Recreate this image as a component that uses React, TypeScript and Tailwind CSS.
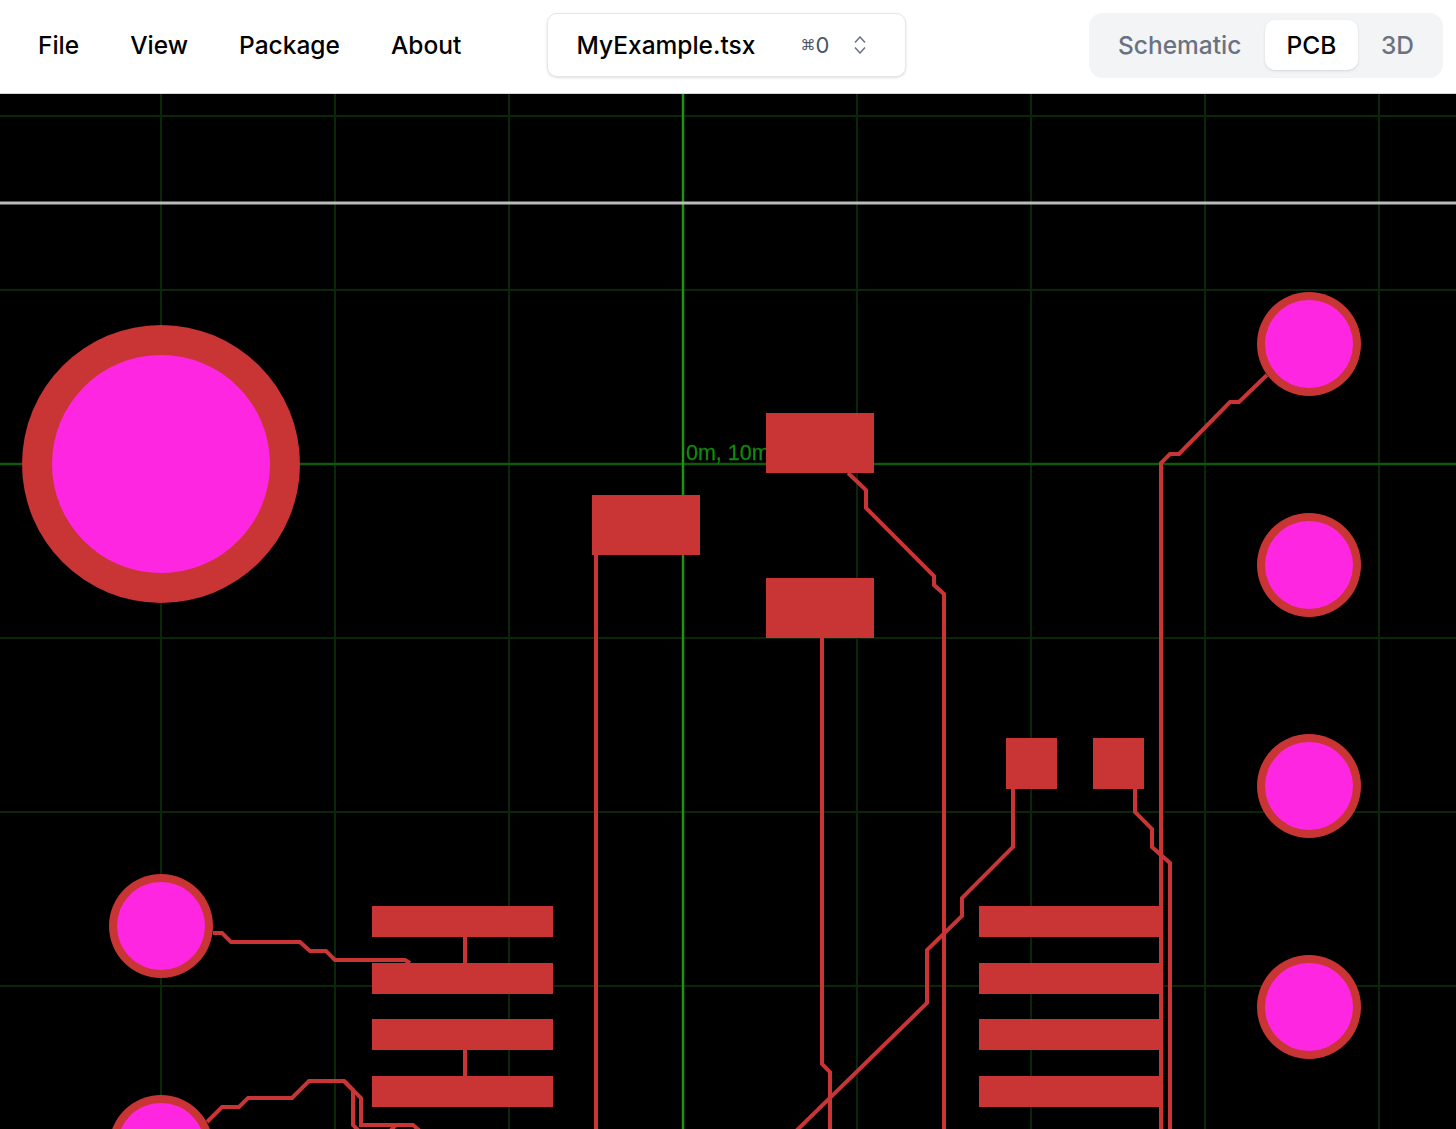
import React from 'react';

const menuItems = ['File', 'View', 'Package', 'About'];

const gridX = [161, 335, 509, 857, 1031, 1205, 1379];
const gridY = [116, 290, 638, 812, 986];

const rects = [
  [592, 495, 108, 60],
  [766, 413, 108, 60],
  [766, 578, 108, 60],
  [1006, 738, 51, 51],
  [1093, 738, 51, 51],
  [372, 906, 181, 31],
  [372, 963, 181, 31],
  [372, 1019, 181, 31],
  [372, 1076, 181, 31],
  [979, 906, 181, 31],
  [979, 963, 181, 31],
  [979, 1019, 181, 31],
  [979, 1076, 181, 31],
];

const holes = [
  [161, 926],
  [161, 1147],
  [1309, 344],
  [1309, 565],
  [1309, 786],
  [1309, 1007],
];

const traces = [
  '596,555 596,1135',
  '848,473 866,490 866,508 934,576 934,585 944,594 944,1135',
  '822,638 822,1064 830,1072 830,1135',
  '792,1135 927,1003 927,950 962,916 962,898 1013,847 1013,789',
  '1135,789 1135,812 1152,829 1152,847 1170,863 1170,1135',
  '1161,1135 1161,463 1170,454 1179,454 1230,402 1239,402 1267,375',
  '213,933 222,933 231,942 300,942 310,951 326,951 335,960 405,960 410,963',
  '465,937 465,963',
  '465,1050 465,1076',
  '207,1122 222,1107 239,1107 248,1098 292,1098 309,1081 344,1081 361,1098 361,1125 413,1125 420,1131',
  '344,1081 353,1090 353,1125 359,1131',
  '390,1131 396,1125',
];

function PcbCanvas() {
  return (
    <svg viewBox="0 94 1456 1035" className="block h-[1035px] w-[1456px] bg-black blur-[0.6px]">
      {gridX.map((x) => (
        <line key={x} x1={x} x2={x} y1={94} y2={1129} stroke="#0a2708" strokeWidth={2} />
      ))}
      {gridY.map((y) => (
        <line key={y} x1={0} x2={1456} y1={y} y2={y} stroke="#0a2708" strokeWidth={2} />
      ))}
      <line x1={0} x2={1456} y1={464} y2={464} stroke="#0f5a0a" strokeWidth={2.5} />
      <line x1={683} x2={683} y1={94} y2={1129} stroke="#1f9412" strokeWidth={2.5} />
      <line x1={0} x2={1456} y1={203} y2={203} stroke="#bcbcbc" strokeWidth={3} />
      <text x={686} y={460} fill="#118a0b" stroke="#118a0b" strokeWidth={0.3} fontSize={21.5} fontFamily="'Liberation Sans', sans-serif">
        0m, 10m
      </text>
      {traces.map((points) => (
        <polyline key={points} points={points} fill="none" stroke="#c93535" strokeWidth={4} />
      ))}
      {rects.map(([x, y, w, h]) => (
        <rect key={`${x}-${y}`} x={x} y={y} width={w} height={h} fill="#c93535" />
      ))}
      <circle cx={161} cy={464} r={139} fill="#c93535" />
      <circle cx={161} cy={464} r={109} fill="#ff26e2" />
      {holes.map(([cx, cy]) => (
        <g key={`${cx}-${cy}`}>
          <circle cx={cx} cy={cy} r={52} fill="#c93535" />
          <circle cx={cx} cy={cy} r={44} fill="#ff26e2" />
        </g>
      ))}
    </svg>
  );
}

export default function App() {
  return (
    <div className="h-[1129px] w-[1456px] overflow-hidden bg-white font-['Inter',sans-serif]">
      <header className="flex h-[94px] items-center border-b border-gray-300 bg-white pb-[3px]">
        <nav className="flex w-[547px] gap-[51px] pl-[38px] text-[24.5px] font-medium text-black">
          {menuItems.map((item) => (
            <span key={item}>{item}</span>
          ))}
        </nav>
        <div className="flex h-[64px] w-[359px] items-center rounded-[10px] border-[1.5px] border-gray-200 bg-white pl-[28.5px] shadow-sm">
          <span className="text-[24.5px] font-medium text-black">MyExample.tsx</span>
          <span className="ml-[45px] flex items-center text-[22px] text-gray-600">
            <span className="text-[15px]">⌘</span>0
          </span>
          <svg viewBox="0 0 12 18" className="ml-[25px] h-[18px] w-[12px] text-gray-500" fill="none" stroke="currentColor" strokeWidth={1.5}>
            <polyline points="1,6.5 6,1 11,6.5" />
            <polyline points="1,11.5 6,17 11,11.5" />
          </svg>
        </div>
        <div className="ml-auto mr-[13px] flex h-[65px] w-[354px] items-center rounded-[14px] bg-gray-100 pl-[8px] text-[24.5px] font-medium text-gray-500">
          <span className="w-[168px] pl-[21px]">Schematic</span>
          <span className="flex h-[50px] w-[93px] items-center justify-center rounded-[10px] bg-white text-black shadow">PCB</span>
          <span className="ml-[23px]">3D</span>
        </div>
      </header>
      <PcbCanvas />
    </div>
  );
}
